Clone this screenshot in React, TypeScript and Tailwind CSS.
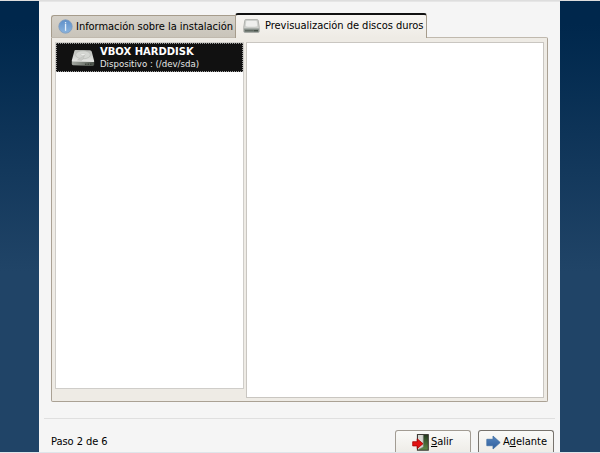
import type { ReactNode } from 'react';

function InfoIcon() {
  return (
    <svg width="15" height="15" viewBox="0 0 15 15" className="shrink-0">
      <defs>
        <linearGradient id="info" x1="0" y1="0" x2="0" y2="1">
          <stop offset="0" stopColor="#5d8fc9" />
          <stop offset="1" stopColor="#8bb4de" />
        </linearGradient>
      </defs>
      <circle cx="7.5" cy="7.5" r="6.7" fill="url(#info)" stroke="#7f9cbd" strokeWidth="0.8" />
      <rect x="6.9" y="3.1" width="1.3" height="1.3" fill="#e6f0fa" />
      <rect x="6.9" y="5" width="1.3" height="6.8" fill="#e6f0fa" />
    </svg>
  );
}

function TabDiskIcon() {
  return (
    <svg width="17" height="14" viewBox="0 0 17 14" className="shrink-0">
      <path d="M2.6.6H14.2Q15 .6 15.2 1.4L16.3 8.5V12.4Q16.3 13.4 15.3 13.4H1.7Q.7 13.4.7 12.4V8.5L1.8 1.4Q2 .6 2.6.6Z" fill="#cfd1cd" stroke="#a4a6a2" strokeWidth="0.8" />
      <path d="M3 1.4H13.9L14.8 6.8Q14 8.1 12 8.1H5Q3 8.1 2.2 6.8Z" fill="#efefed" stroke="#bfc1bd" strokeWidth="0.5" />
      <path d="M1.1 9.6H15.9V12.4Q15.9 13.2 15.2 13.2H1.8Q1.1 13.2 1.1 12.4Z" fill="#858d87" />
      <path d="M2 11.7H10" stroke="#5c655e" strokeWidth="1.2" />
      <path d="M10.5 11.7H15" stroke="#465048" strokeWidth="1.4" />
    </svg>
  );
}

function DiskIcon() {
  return (
    <svg width="24" height="18" viewBox="0 0 24 18" className="shrink-0">
      <defs>
        <linearGradient id="disk" x1="0" y1="0" x2="0" y2="1">
          <stop offset="0" stopColor="#b9bbb7" />
          <stop offset="1" stopColor="#e8e9e6" />
        </linearGradient>
        <linearGradient id="diskFront" x1="0" y1="0" x2="1" y2="0">
          <stop offset="0" stopColor="#a3a7a1" />
          <stop offset="0.55" stopColor="#777d75" />
          <stop offset="1" stopColor="#4b524a" />
        </linearGradient>
      </defs>
      <path d="M.8 11.5L23.2 12.2V15.6Q23.2 17 21.7 17L2 16.2Q.8 16 .8 14.8Z" fill="url(#diskFront)" />
      <path d="M4.4.9L19 1.3Q20.3 1.4 20.7 2.6L23.2 12.2Q23 13.1 22 13.1L1.8 12.5Q.8 12.3.8 11.4L3.4 1.7Q3.6.9 4.4.9Z" fill="url(#disk)" />
      <ellipse cx="12" cy="5.8" rx="7.4" ry="4" fill="#d5d7d3" stroke="#b2b5b0" strokeWidth="0.6" />
      <ellipse cx="12" cy="5.6" rx="2.1" ry="1.1" fill="#eeeeec" stroke="#babdb8" strokeWidth="0.4" />
      <path d="M6.5 11L9 9.2 13.5 6.5 12.2 9.8 10.5 11.4Z" fill="#c9cbc7" stroke="#b2b5b0" strokeWidth="0.4" />
      <path d="M14 15.2H21" stroke="#2f352e" strokeWidth="1" strokeDasharray="1.5 1" />
    </svg>
  );
}

function ExitIcon() {
  return (
    <svg width="17" height="17" viewBox="0 0 17 17" className="shrink-0">
      <defs>
        <linearGradient id="outside" x1="0" y1="0" x2="0" y2="1">
          <stop offset="0" stopColor="#243a1f" />
          <stop offset="1" stopColor="#5f8b48" />
        </linearGradient>
      </defs>
      <rect x="5.4" y=".6" width="10.9" height="15.6" fill="url(#outside)" stroke="#38352f" strokeWidth="1" />
      <path d="M6 1H11.3V13L6 15.7Z" fill="#d8d8d3" />
      <path d="M11.3 1V13L6 15.7" fill="none" stroke="#777a72" strokeWidth="0.6" />
      <path d="M.7 7.7H5.2V4.8L11 9.7 5.2 14.6V11.9H.7Z" fill="#e21212" stroke="#a80000" strokeWidth="0.8" />
    </svg>
  );
}

function ForwardIcon() {
  return (
    <svg width="15" height="15" viewBox="0 0 15 15" className="mt-px shrink-0">
      <defs>
        <linearGradient id="forward" x1="0" y1="0" x2="0" y2="1">
          <stop offset="0" stopColor="#5484bd" />
          <stop offset="1" stopColor="#315f9e" />
        </linearGradient>
      </defs>
      <path d="M.8 4.3H7V1L14.2 7.5 7 14V10.7H.8Z" fill="url(#forward)" stroke="#4471a5" strokeWidth="0.8" strokeLinejoin="round" />
    </svg>
  );
}

function ActionButton({ icon, className, children }: { icon: ReactNode; className: string; children: ReactNode }) {
  return (
    <button className={`flex h-6 items-start rounded-t-[3px] border border-b-0 bg-linear-to-b from-[#fafaf8] to-[#edebe6] pt-[3px] whitespace-nowrap ${className}`}>
      {icon}
      {children}
    </button>
  );
}

export default function App() {
  return (
    <div className="flex h-[453px] w-[600px] flex-col overflow-hidden bg-[#dfe5ea] font-['DejaVu_Sans_Condensed','DejaVu_Sans',sans-serif] text-[11px] leading-[15px] text-black [font-stretch:condensed]">
      <div className="h-px shrink-0 bg-[#dedede]" />
      <div className="flex h-[451px] shrink-0 overflow-hidden bg-linear-to-b from-[#00274c] from-5% via-[#204467] via-60% to-[#204467]">
        <main className="ml-[39px] flex w-[521px] flex-col border-t border-[#e6e6e6] bg-[#f5f5f5] pt-[11px]">
          <div className="flex h-6 shrink-0 items-end pl-3">
            <div className="flex h-[22px] w-[184px] items-center rounded-tl-[3px] border border-r-0 border-b-0 border-[#a69c8c] bg-linear-to-b from-[#d5d1c9] to-[#c9c4ba] pl-[6px]">
              <InfoIcon />
              <span className="ml-[3px] tracking-[-0.03px] whitespace-nowrap">Información sobre la instalación</span>
            </div>
            <div className="relative -mb-px flex h-[25px] w-[192px] items-center rounded-t-[3px] border-x border-t-2 border-x-[#a69c8c] border-t-[#111111] bg-linear-to-b from-[#f7f5f2] to-[#eeebe5] pb-px pl-[7px]">
              <TabDiskIcon />
              <span className="-mt-px ml-[5px] tracking-[-0.03px] whitespace-nowrap">Previsualización de discos duros</span>
            </div>
          </div>
          <section className="ml-3 flex h-[365px] w-[497px] shrink-0 items-start gap-[2px] rounded-tr-[2px] rounded-b-[2px] border border-[#aaa194] border-t-[#c0b9ae] bg-[#eeebe5] pt-1 pl-[3px]">
            <div className="h-[347px] w-[189px] border border-[#cfcdc9] bg-white">
              <div className="flex h-[29px] items-center border border-dotted border-[#9a9a9a] bg-[#111111] pl-[14px] text-white">
                <DiskIcon />
                <div className="ml-[5px] pt-px whitespace-nowrap">
                  <div className="font-['DejaVu_Sans',sans-serif] text-[10px] leading-[12px] font-bold [font-stretch:normal]">VBOX HARDDISK</div>
                  <div className="font-['DejaVu_Sans',sans-serif] text-[8.6px] leading-[12px] text-[#e8e8e8] [font-stretch:normal]">Dispositivo : (/dev/sda)</div>
                </div>
              </div>
            </div>
            <div className="h-[356px] w-[298px] border border-[#c9c6c1] bg-white" />
          </section>
          <hr className="mt-4 ml-[5px] w-[511px] shrink-0 border-[#dfdfdf]" />
          <footer className="mt-[11px] flex shrink-0 items-start pl-3">
            <span className="mt-1 w-[344px] tracking-[-0.05px]">Paso 2 de 6</span>
            <ActionButton icon={<ExitIcon />} className="w-[76px] border-[#a29c93] pl-4">
              <span className="ml-[2px]"><u>S</u>alir</span>
            </ActionButton>
            <ActionButton icon={<ForwardIcon />} className="ml-[7px] w-[76px] border-[#77736d] pl-[7px]">
              <span className="ml-[2px]">A<u>d</u>elante</span>
            </ActionButton>
          </footer>
        </main>
      </div>
    </div>
  );
}
